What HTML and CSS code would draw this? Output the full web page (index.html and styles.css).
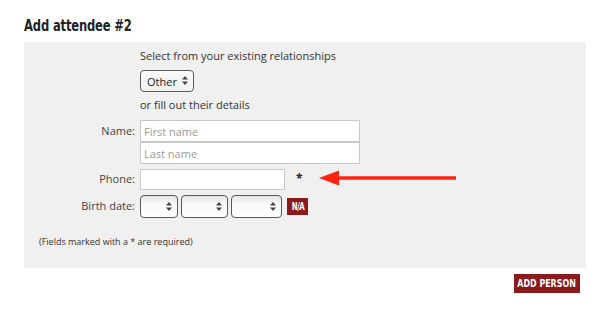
FILE: index.html
```html
<!DOCTYPE html>
<html>
<head>
<meta charset="utf-8">
<link rel="stylesheet" href="styles.css">
</head>
<body>
<div class="page">
  <h2 class="title"><span class="narrow">Add attendee #2</span></h2>
  <div class="box">
    <div class="row">
      <div class="label"></div>
      <div class="field">
        <div class="intro">Select from your existing relationships</div>
        <div class="sel sel-other">
          <select class="select"><option>Other</option></select>
          <svg class="arr" width="6" height="9" viewBox="0 0 6 9"><path d="M0 3.5 L3 0 L6 3.5 Z M0 5.5 L3 9 L6 5.5 Z" fill="#444"/></svg>
        </div>
        <div class="or">or fill out their details</div>
      </div>
    </div>
    <div class="row row-name">
      <div class="label">Name:</div>
      <div class="field">
        <input class="input wide" placeholder="First name">
        <input class="input wide" placeholder="Last name">
      </div>
    </div>
    <div class="row row-phone">
      <div class="label">Phone:</div>
      <div class="field inline">
        <input class="input phone">
        <span class="req">*</span>
        <svg class="pointer" width="138" height="16" viewBox="0 0 138 16"><path d="M0 8 L20 0.5 L20 6.3 L137 6.3 L137 9.7 L20 9.7 L20 15.5 Z" fill="#ff2410"/></svg>
      </div>
    </div>
    <div class="row row-birth">
      <div class="label">Birth date:</div>
      <div class="field inline">
        <div class="sel sel-d1"><select class="select"></select><svg class="arr" width="6" height="9" viewBox="0 0 6 9"><path d="M0 3.5 L3 0 L6 3.5 Z M0 5.5 L3 9 L6 5.5 Z" fill="#444"/></svg></div>
        <div class="sel sel-d2"><select class="select"></select><svg class="arr" width="6" height="9" viewBox="0 0 6 9"><path d="M0 3.5 L3 0 L6 3.5 Z M0 5.5 L3 9 L6 5.5 Z" fill="#444"/></svg></div>
        <div class="sel sel-d3"><select class="select"></select><svg class="arr" width="6" height="9" viewBox="0 0 6 9"><path d="M0 3.5 L3 0 L6 3.5 Z M0 5.5 L3 9 L6 5.5 Z" fill="#444"/></svg></div>
        <button class="na"><span class="narrow">N/A</span></button>
      </div>
    </div>
    <p class="note">(Fields marked with a * are required)</p>
  </div>
  <div class="actions">
    <button class="add"><span class="narrow">ADD PERSON</span></button>
  </div>
</div>
</body>
</html>
```
FILE: styles.css
```css
* { box-sizing: border-box; }
body {
  margin: 0;
  background: #fff;
  font-family: "Open Sans", "DejaVu Sans", sans-serif;
  color: #333;
}
.page {
  padding: 0 12px 0 24px;
}
.narrow {
  display: inline-block;
  transform: scaleX(0.8);
}
.title {
  margin: 0;
  padding-top: 17px;
  height: 42px;
  font-family: "DejaVu Sans", sans-serif;
  font-weight: bold;
  font-size: 15px;
  line-height: 18px;
  color: #222;
  letter-spacing: -0.2px;
}
.title .narrow {
  transform-origin: left center;
  transform: scaleX(0.77);
  white-space: nowrap;
}
.box {
  background: #f0f0f0;
  padding: 6px 0 20px 0;
}
.row {
  display: flex;
  gap: 5px;
}
.label {
  width: 111px;
  flex: none;
  text-align: right;
  font-size: 11px;
  color: #444;
}
.field {
  display: flex;
  flex-direction: column;
  align-items: flex-start;
}
.field.inline {
  flex-direction: row;
  align-items: center;
}
.intro, .or {
  font-size: 11px;
  line-height: 16px;
  color: #333;
}
.or { margin-top: 5px; }
.sel {
  position: relative;
  display: block;
}
.sel-other { margin-top: 6px; }
.select {
  appearance: none;
  -webkit-appearance: none;
  display: block;
  height: 23px;
  border: 1px solid #5a5a5a;
  border-radius: 4px;
  background: linear-gradient(#e4e4e4, #f9f9f9 40%, #ffffff);
  font-family: "Open Sans", sans-serif;
  font-size: 11px;
  color: #222;
  padding: 0 0 0 6px;
  margin: 0;
}
.sel .arr {
  position: absolute;
  right: 6px;
  top: 7px;
}
.sel-other .select {
  width: 54px;
  height: 22px;
  background: linear-gradient(#fafafa, #f0f0f0);
}
.sel-other .arr { top: 6px; }
.sel-d1 .select { width: 38px; }
.sel-d2 { margin-left: 3px; }
.sel-d2 .select { width: 47px; }
.sel-d3 { margin-left: 3px; }
.sel-d3 .select { width: 51px; }
.row-name { margin-top: 7px; }
.row-name .label { line-height: 22px; }
.input {
  display: block;
  height: 22px;
  border: 1px solid #c8c8c8;
  background: #fff;
  font-family: "Open Sans", sans-serif;
  font-size: 11px;
  padding: 0 3px;
  margin: 0;
  color: #333;
}
.input::placeholder { color: #9a9a9a; }
.wide { width: 220px; }
.row-phone { margin-top: 5px; }
.row-phone .label { line-height: 19px; }
.phone { width: 145px; height: 21px; }
.req {
  margin-left: 11px;
  font-weight: bold;
  font-size: 12px;
  color: #222;
  line-height: 21px;
  position: relative;
  top: -1px;
}
.pointer { margin-left: 16px; position: relative; top: -2px; }
.row-birth { margin-top: 5px; }
.row-birth .label { line-height: 22px; }
.na {
  margin-left: 5px;
  width: 21px;
  height: 17px;
  padding: 0;
  border: none;
  background: #8b1a1c;
  color: #fff;
  font-family: "DejaVu Sans", sans-serif;
  font-weight: bold;
  font-size: 10px;
  letter-spacing: -0.6px;
  white-space: nowrap;
  display: flex;
  align-items: center;
  justify-content: center;
  overflow: visible;
}
.na .narrow { transform: scaleX(0.7); }
.note {
  margin: 18px 0 0 15px;
  font-size: 9px;
  line-height: 12px;
  color: #333;
}
.actions {
  display: flex;
  justify-content: flex-end;
  padding-right: 6px;
  margin-top: 6px;
}
.add {
  width: 66px;
  height: 19px;
  padding: 0;
  border: none;
  background: #8b1a1c;
  color: #fff;
  font-family: "DejaVu Sans", sans-serif;
  font-weight: bold;
  font-size: 11px;
  white-space: nowrap;
  display: flex;
  align-items: center;
  justify-content: center;
}
.add .narrow { transform: scaleX(0.72); }
```
